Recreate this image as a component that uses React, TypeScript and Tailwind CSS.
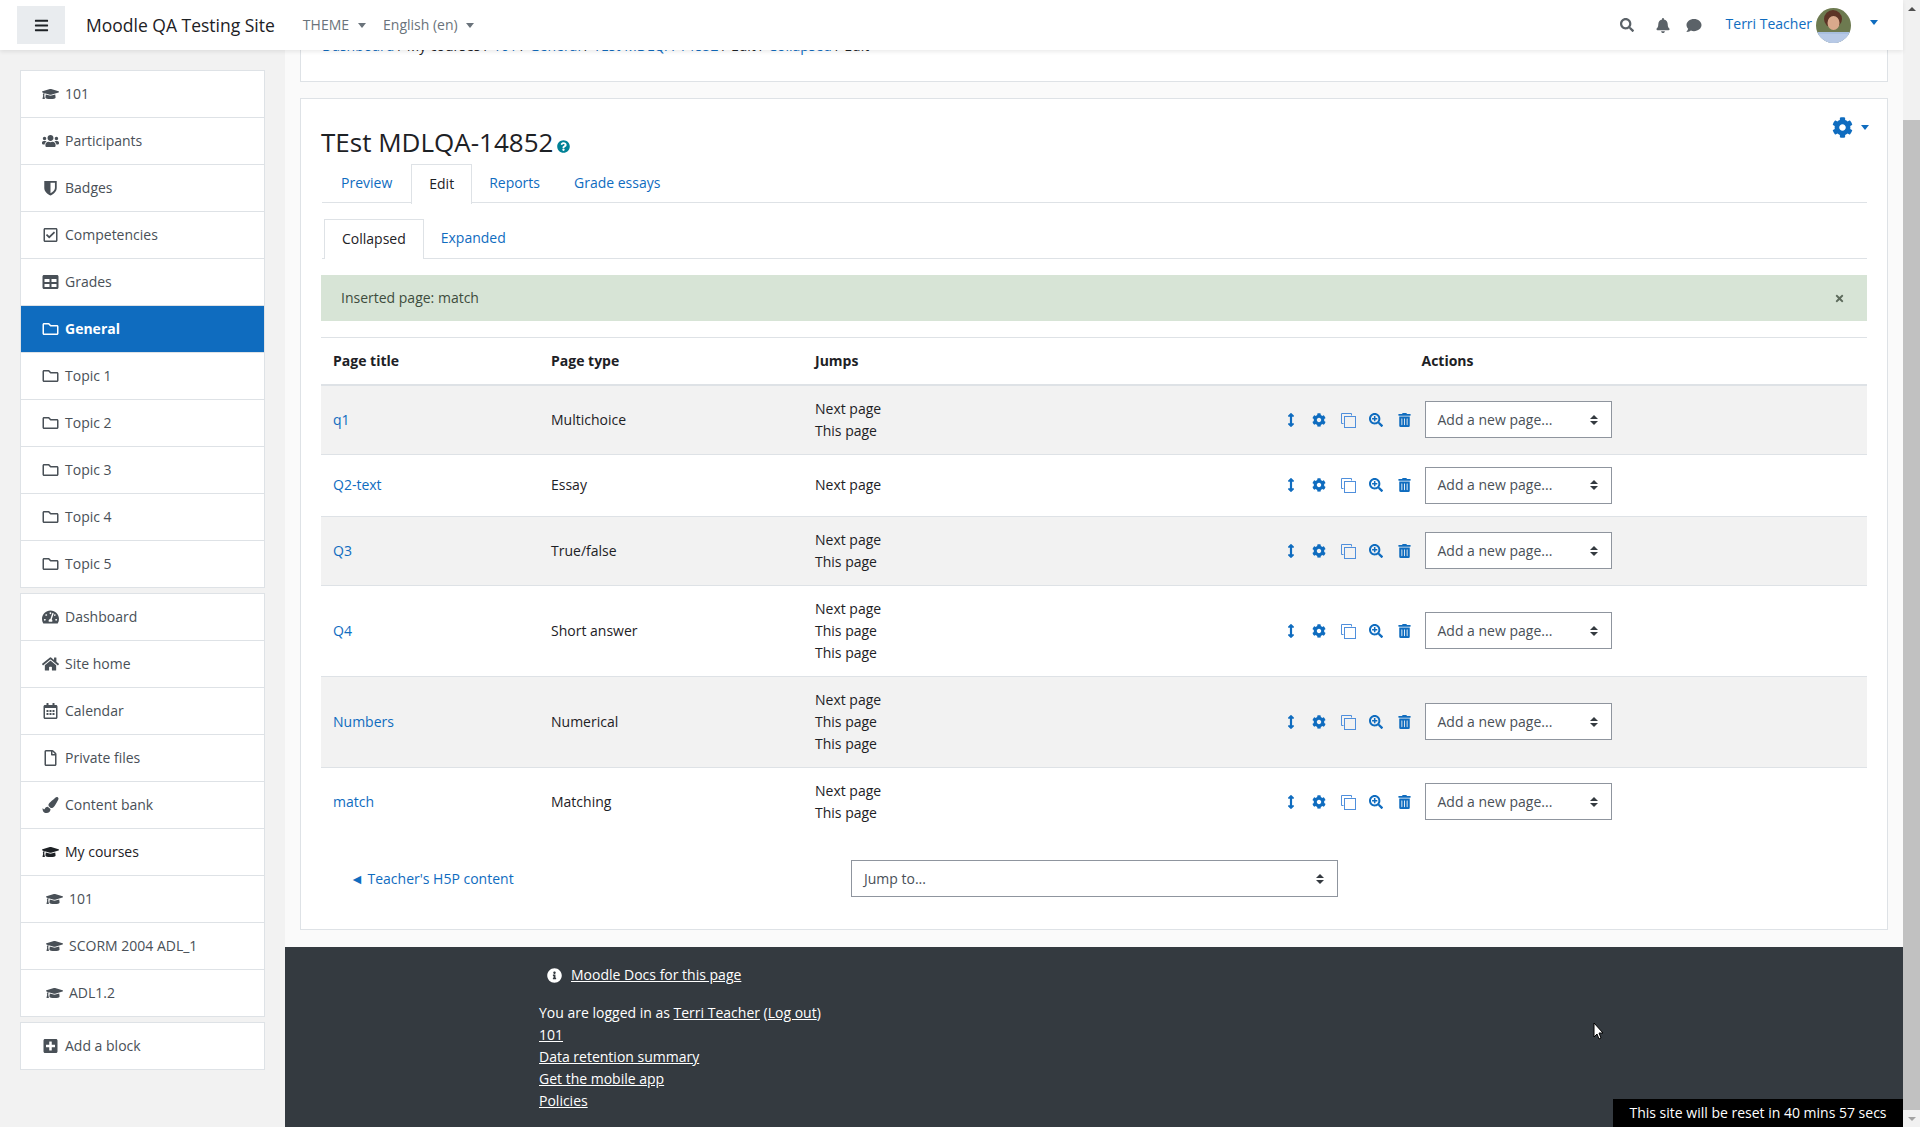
import React from "react";
import {
  FaBars, FaSearch, FaBell, FaComment, FaCog, FaQuestionCircle, FaGraduationCap, FaUsers,
  FaRegCheckSquare, FaTable, FaRegFolder, FaTachometerAlt, FaHome, FaRegCalendarAlt, FaRegFile,
  FaPaintBrush, FaPlusSquare, FaTimes, FaArrowsAltV, FaSearchPlus, FaTrashAlt, FaInfoCircle,
} from "react-icons/fa";

const ShieldIcon = ({ className }: { className?: string }) => (
  <svg viewBox="0 0 16 18" className={className} fill="currentColor">
    <path d="M1 1h14v8c0 4-3.500 7-7 8.500C4.500 16 1 13 1 9zM8 3v11.800c2.500-1.300 5-3.300 5-5.800V3z" fillRule="evenodd" />
  </svg>
);

const CopyIcon = () => (
  <svg viewBox="0 0 16 16" className="w-4 h-4 text-[#4f8fdc]" fill="none" stroke="currentColor" strokeWidth="1">
    <path d="M3.500 11.500h-2v-10h10v2" />
    <rect x="4.500" y="4.500" width="11" height="11" />
  </svg>
);

const Caret = ({ className }: { className: string }) => (
  <span className={`inline-block w-0 h-0 border-x-[4px] border-x-transparent border-t-[5px] ${className}`} />
);

const SelectArrows = () => (
  <span className="flex flex-col gap-[2px]">
    <span className="w-0 h-0 border-x-[4px] border-x-transparent border-b-[4px] border-b-[#343a40]" />
    <span className="w-0 h-0 border-x-[4px] border-x-transparent border-t-[4px] border-t-[#343a40]" />
  </span>
);

type NavItem = { icon: React.ElementType; label: string; active?: boolean; dark?: boolean; nested?: boolean };

const courseNav: NavItem[] = [
  { icon: FaGraduationCap, label: "101" },
  { icon: FaUsers, label: "Participants" },
  { icon: ShieldIcon, label: "Badges" },
  { icon: FaRegCheckSquare, label: "Competencies" },
  { icon: FaTable, label: "Grades" },
  { icon: FaRegFolder, label: "General", active: true },
  { icon: FaRegFolder, label: "Topic 1" },
  { icon: FaRegFolder, label: "Topic 2" },
  { icon: FaRegFolder, label: "Topic 3" },
  { icon: FaRegFolder, label: "Topic 4" },
  { icon: FaRegFolder, label: "Topic 5" },
];

const siteNav: NavItem[] = [
  { icon: FaTachometerAlt, label: "Dashboard" },
  { icon: FaHome, label: "Site home" },
  { icon: FaRegCalendarAlt, label: "Calendar" },
  { icon: FaRegFile, label: "Private files" },
  { icon: FaPaintBrush, label: "Content bank" },
  { icon: FaGraduationCap, label: "My courses", dark: true },
  { icon: FaGraduationCap, label: "101", nested: true },
  { icon: FaGraduationCap, label: "SCORM 2004 ADL_1", nested: true },
  { icon: FaGraduationCap, label: "ADL1.2", nested: true },
];

const NavBlock = ({ items }: { items: NavItem[] }) => (
  <div className="bg-white border border-[#dee2e6]">
    {items.map((item, i) => (
      <div
        key={i}
        className={`h-[47px] flex items-center border-b border-[#dee2e6] last:border-b-0 last:h-[46px] ${
          item.active ? "bg-[#0f6cbf] text-white font-bold" : item.dark ? "text-[#1d2125]" : "text-[#495057]"
        } ${item.nested ? "pl-[25px]" : "pl-[21px]"}`}
      >
        <span className={`${item.nested ? "w-[23px]" : "w-[23px]"} shrink-0 flex`}>
          <item.icon className="w-[17px] h-[16px]" />
        </span>
        {item.label}
      </div>
    ))}
  </div>
);

type PageRow = { title: string; type: string; jumps: string[]; shaded: boolean };

const rows: PageRow[] = [
  { title: "q1", type: "Multichoice", jumps: ["Next page", "This page"], shaded: true },
  { title: "Q2-text", type: "Essay", jumps: ["Next page"], shaded: false },
  { title: "Q3", type: "True/false", jumps: ["Next page", "This page"], shaded: true },
  { title: "Q4", type: "Short answer", jumps: ["Next page", "This page", "This page"], shaded: false },
  { title: "Numbers", type: "Numerical", jumps: ["Next page", "This page", "This page"], shaded: true },
  { title: "match", type: "Matching", jumps: ["Next page", "This page"], shaded: false },
];

const footerLinks = ["101", "Data retention summary", "Get the mobile app", "Policies"];

export default function App() {
  return (
    <div className="h-[1127px] w-full overflow-hidden flex bg-[#f2f2f2] font-['Open_Sans',sans-serif] text-[14px] leading-[22px] text-[#1d2125]">
      <div className="flex-1 min-w-0 flex flex-col relative">
        <header className="h-[50px] shrink-0 bg-white shadow-[0_2px_4px_rgba(0,0,0,0.08)] relative z-10 flex items-center pl-[17px] pr-[25px]">
          <button className="w-[48px] h-[38px] bg-[#e9ecef] flex items-center justify-center text-[#1d2125]">
            <FaBars className="w-[15px] h-[15px]" />
          </button>
          <span className="ml-[21px] text-[17.5px] text-[#1d2125]">Moodle QA Testing Site</span>
          <span className="ml-[28px] text-[#6a737b] flex items-center gap-[9px]">THEME <Caret className="border-t-[#6a737b]" /></span>
          <span className="ml-[17px] text-[#6a737b] flex items-center gap-[8px]">English (en) <Caret className="border-t-[#6a737b]" /></span>
          <div className="ml-auto flex items-center text-[#5b6268]">
            <FaSearch className="w-[14px] h-[14px]" />
            <FaBell className="w-[14px] h-[15px] ml-[22px]" />
            <FaComment className="w-[16px] h-[15px] ml-[16px]" />
            <span className="ml-[24px] text-[#0f6cbf] -mt-[3px]">Terri Teacher</span>
            <svg viewBox="0 0 35 35" className="w-[35px] h-[35px] ml-[4px] mt-[1px]">
              <clipPath id="av"><circle cx="17.500" cy="17.500" r="17.500" /></clipPath>
              <g clipPath="url(#av)">
                <rect width="35" height="35" fill="#6d7a50" />
                <rect y="24" width="35" height="11" fill="#a9bfdf" />
                <ellipse cx="17" cy="11" rx="9" ry="9" fill="#5c3426" />
                <ellipse cx="17.500" cy="15" rx="6" ry="7" fill="#d9a98c" />
                <rect x="2" y="26" width="31" height="9" fill="#b7c9e6" />
              </g>
            </svg>
            <Caret className="border-t-[#0f6cbf] ml-[19px] -mt-[6px]" />
          </div>
        </header>

        <div className="flex-1 min-h-0 flex">
          <aside className="w-[285px] shrink-0 pt-[20px] pl-[20px] pr-[20px] flex flex-col gap-[5px]">
            <NavBlock items={courseNav} />
            <NavBlock items={siteNav} />
            <NavBlock items={[{ icon: FaPlusSquare, label: "Add a block" }]} />
          </aside>

          <div className="flex-1 min-w-0 flex flex-col bg-[#fafafa]">
            <div className="flex-1 pl-[15px] pr-[15px]">
              <div className="h-[50px] -mt-[18px] bg-white border border-[#dee2e6] px-[21px] pt-[2px]">
                <span className="text-[#0f6cbf]">Dashboard</span> / My courses / <span className="text-[#0f6cbf]">101</span> / <span className="text-[#0f6cbf]">General</span> / <span className="text-[#0f6cbf]">TEst MDLQA-14852</span> / Edit / <span className="text-[#0f6cbf]">Collapsed</span> / Edit
              </div>

              <section className="mt-[16px] h-[832px] bg-white border border-[#dee2e6] px-[20px] pt-[21px] relative">
                <div className="absolute right-[18px] top-[18px] flex items-center gap-[8px] text-[#0f6cbf]">
                  <FaCog className="w-[21px] h-[21px]" />
                  <Caret className="border-t-[#0f6cbf]" />
                </div>
                <h2 className="h-[44px] flex items-center text-[26px] leading-[44px] text-[#1d2125]">
                  TEst MDLQA-14852
                  <FaQuestionCircle className="w-[13px] h-[13px] text-[#008196] ml-[4px] mt-[8px]" />
                </h2>

                <div className="flex h-[39px] border-b border-[#dee2e6] ml-[1px]">
                  <span className="px-[19px] h-[39px] leading-[38px] text-[#0f6cbf]">Preview</span>
                  <span className="px-[17px] h-[40px] leading-[38px] bg-white border border-b-0 border-[#dee2e6]">Edit</span>
                  <span className="px-[17px] h-[39px] leading-[38px] text-[#0f6cbf]">Reports</span>
                  <span className="px-[17px] h-[39px] leading-[38px] text-[#0f6cbf]">Grade essays</span>
                </div>

                <div className="flex h-[40px] mt-[16px] border-b border-[#dee2e6] ml-[1px] pl-[2px]">
                  <span className="px-[17px] h-[40px] leading-[38px] bg-white border border-b-0 border-[#dee2e6]">Collapsed</span>
                  <span className="px-[17px] h-[39px] leading-[38px] text-[#0f6cbf]">Expanded</span>
                </div>

                <div className="mt-[16px] h-[46px] bg-[#d7e4d6] text-[#3e4c3d] flex items-center justify-between pl-[20px] pr-[22px]">
                  Inserted page: match
                  <FaTimes className="w-[11px] h-[11px] text-[#5d6b5c]" />
                </div>

                <table className="w-full mt-[16px] table-fixed border-t border-[#dee2e6]">
                  <colgroup>
                    <col className="w-[218px]" />
                    <col className="w-[264px]" />
                    <col className="w-[225px]" />
                    <col />
                  </colgroup>
                  <thead>
                    <tr className="h-[47px] border-b-2 border-[#dee2e6] font-bold text-left">
                      <th className="px-[12px]">Page title</th>
                      <th className="px-[12px]">Page type</th>
                      <th className="px-[12px]">Jumps</th>
                      <th className="px-[12px] text-center">Actions</th>
                    </tr>
                  </thead>
                  <tbody>
                    {rows.map((row, i) => (
                      <tr key={i} className={`${row.shaded ? "bg-[#f2f2f2]" : ""} ${i < rows.length - 1 ? "border-b border-[#dee2e6]" : ""}`}>
                        <td className="px-[12px] py-[12px] text-[#0f6cbf]">{row.title}</td>
                        <td className="px-[12px] py-[12px]">{row.type}</td>
                        <td className="px-[12px] py-[12px]">
                          {row.jumps.map((jump, j) => (
                            <div key={j}>{jump}</div>
                          ))}
                        </td>
                        <td className="px-[12px] py-[12px]">
                          <div className="flex items-center justify-center text-[#0f6cbf]">
                            <FaArrowsAltV className="w-[14px] h-[14px]" />
                            <FaCog className="w-[14px] h-[14px] ml-[14px]" />
                            <span className="ml-[14px]"><CopyIcon /></span>
                            <FaSearchPlus className="w-[14px] h-[14px] ml-[13px]" />
                            <FaTrashAlt className="w-[13px] h-[14px] ml-[15px]" />
                            <div className="ml-[14px] w-[187px] h-[37px] bg-white border border-[#8f959e] flex items-center justify-between pl-[12px] pr-[13px] text-[#495057]">
                              Add a new page...
                              <SelectArrows />
                            </div>
                          </div>
                        </td>
                      </tr>
                    ))}
                  </tbody>
                </table>

                <div className="flex items-center mt-[32px]">
                  <span className="ml-[29px] text-[#0f6cbf]">◄ Teacher's H5P content</span>
                  <div className="absolute left-[550px] w-[487px] h-[37px] bg-white border border-[#8f959e] flex items-center justify-between pl-[12px] pr-[13px] text-[#495057]">
                    Jump to...
                    <SelectArrows />
                  </div>
                </div>
              </section>
            </div>

            <footer className="h-[180px] mt-[17px] shrink-0 bg-[#343a40] text-white pl-[254px] pt-[17px] relative">
              <div className="flex items-center pl-[8px]">
                <FaInfoCircle className="w-[15px] h-[15px]" />
                <span className="ml-[9px] underline">Moodle Docs for this page</span>
              </div>
              <div className="mt-[16px]">
                You are logged in as <span className="underline">Terri Teacher</span> (<span className="underline">Log out</span>)
              </div>
              {footerLinks.map((link) => (
                <div key={link}><span className="underline">{link}</span></div>
              ))}
              <div className="absolute right-0 bottom-0 w-[290px] h-[28px] bg-black text-center leading-[28px]">
                This site will be reset in 40 mins 57 secs
              </div>
              <svg viewBox="0 0 12 18" className="absolute left-[1308px] top-[75px] w-[12px] h-[18px]">
                <path d="M1 1v14l3-3 2 5 2-1-2-5h4z" fill="#fff" stroke="#000" strokeWidth="1" />
              </svg>
            </footer>
          </div>
        </div>
      </div>

      <div className="w-[17px] shrink-0 bg-[#f1f1f1] flex flex-col items-center">
        <div className="h-[17px] flex items-center"><span className="w-0 h-0 border-x-[4px] border-x-transparent border-b-[4px] border-b-[#505050]" /></div>
        <div className="flex-1 w-full pt-[103px]"><div className="h-[990px] w-full bg-[#c1c1c1]" /></div>
        <div className="h-[17px] flex items-center"><span className="w-0 h-0 border-x-[4px] border-x-transparent border-t-[4px] border-t-[#a3a3a3]" /></div>
      </div>
    </div>
  );
}
